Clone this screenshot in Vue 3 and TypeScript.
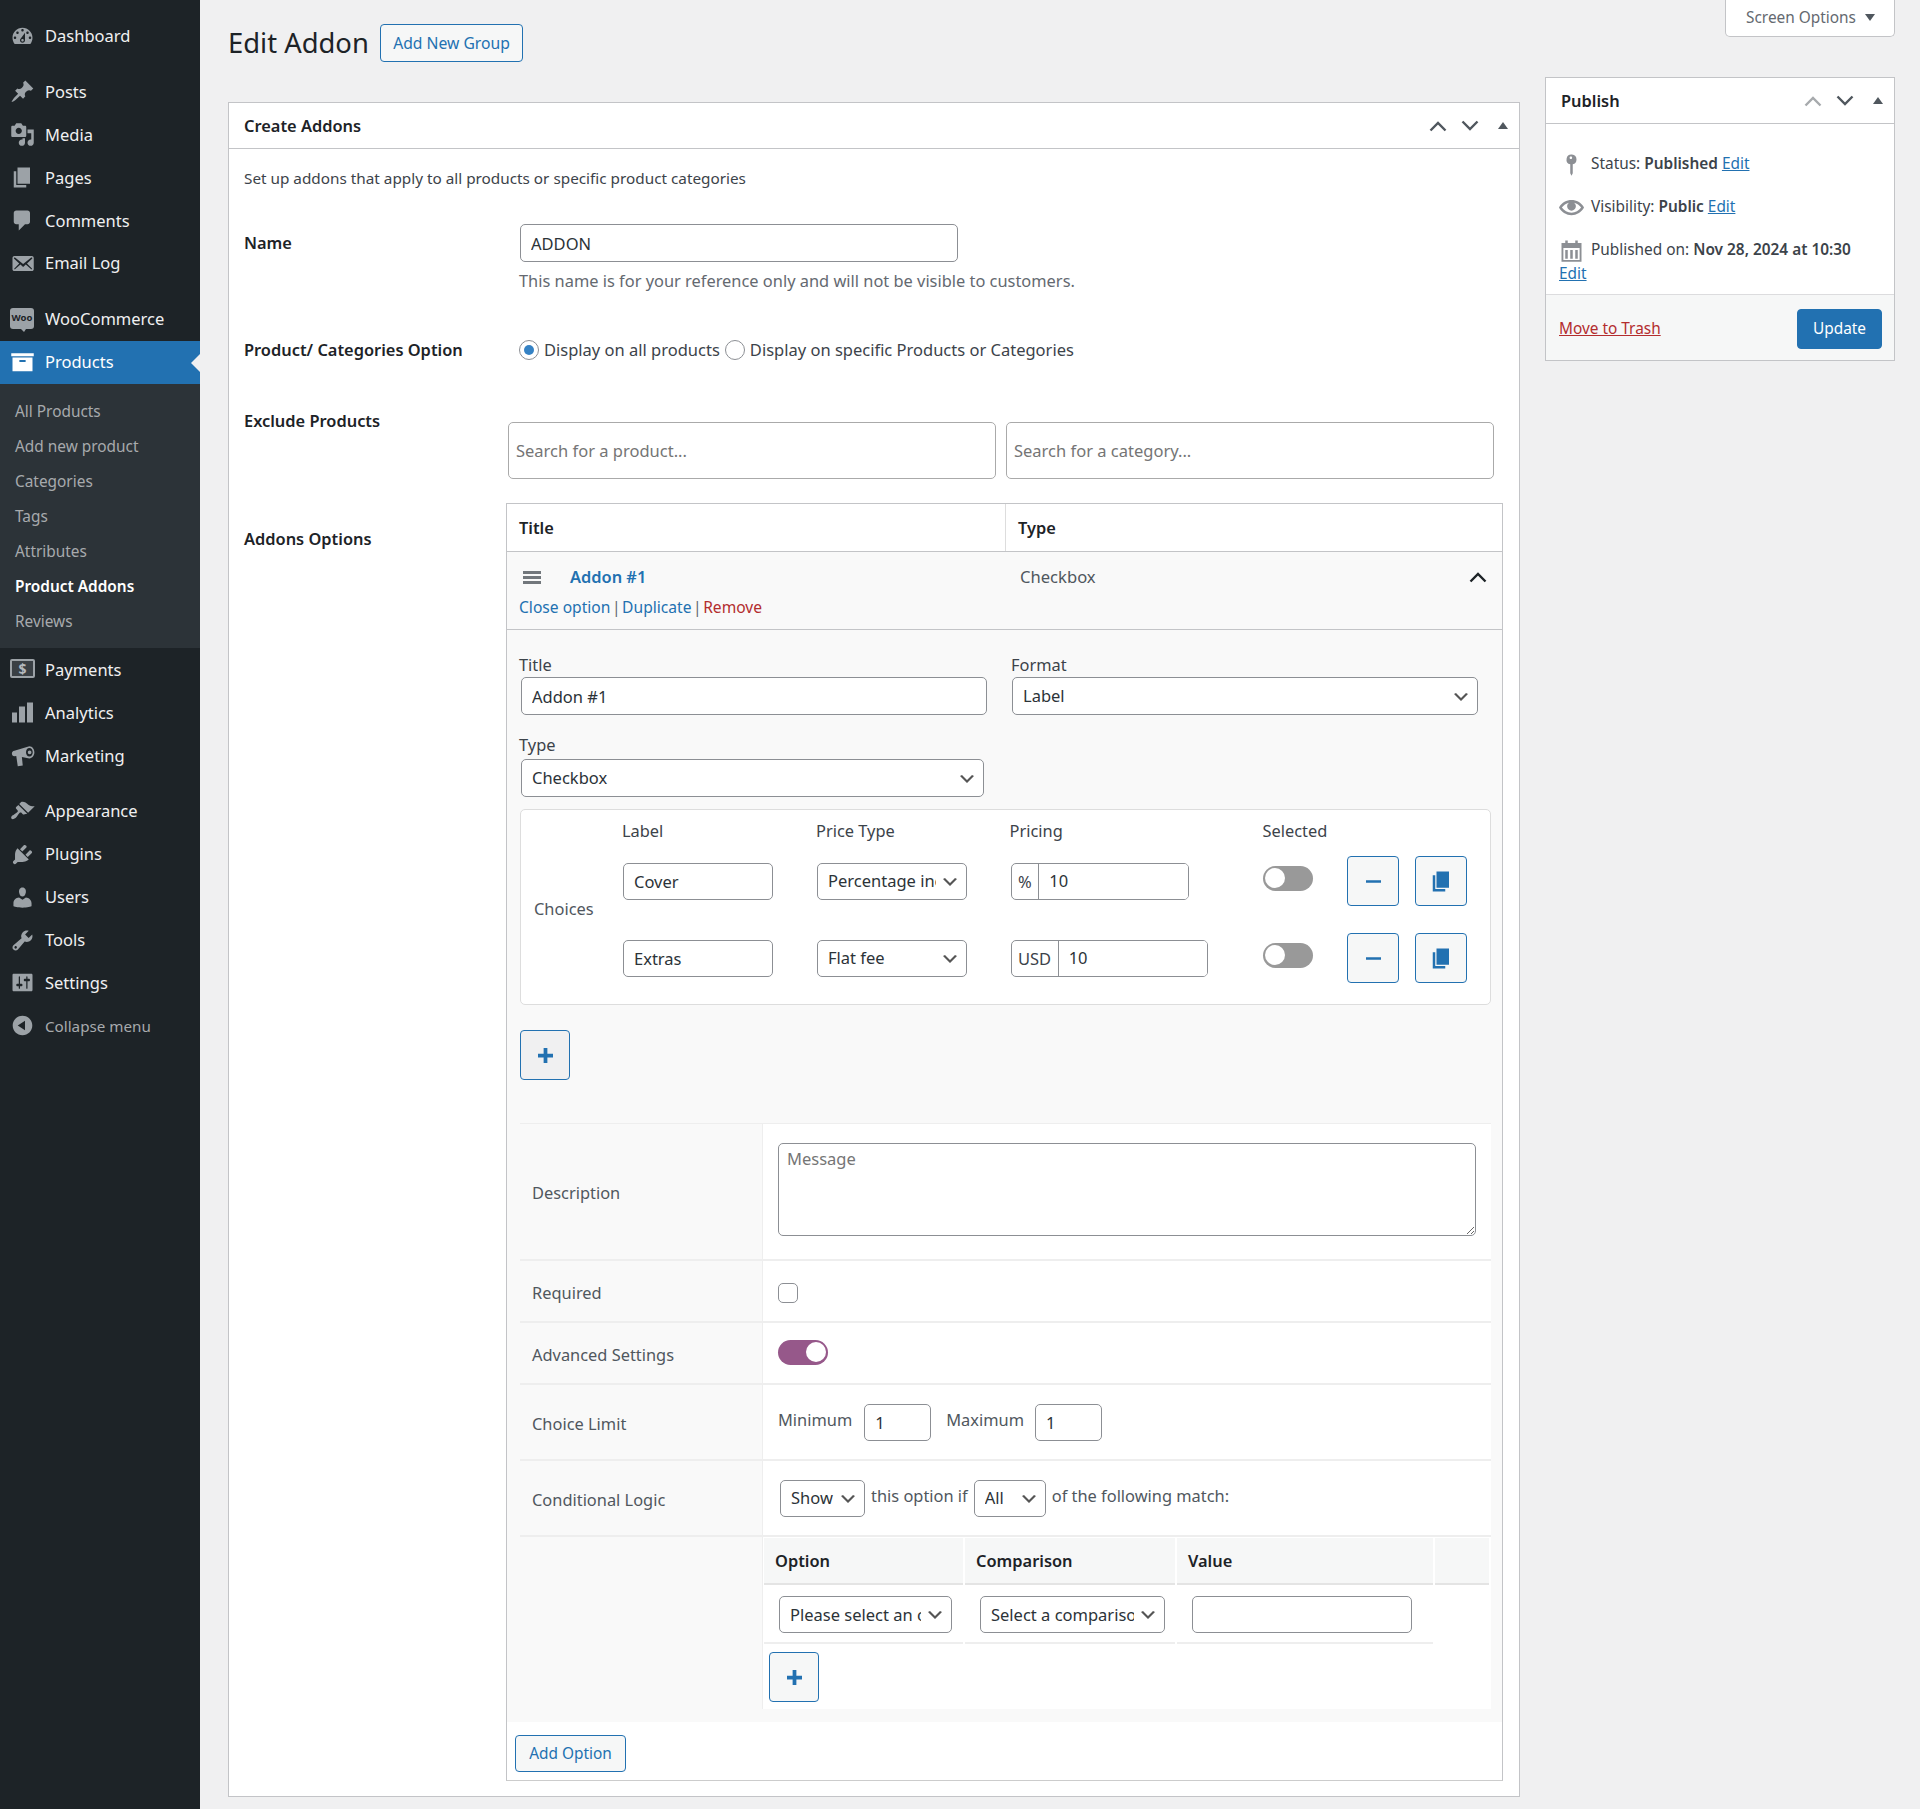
<template>
  <div class="page">
    <!-- Admin sidebar -->
    <aside class="sidebar">
      <template v-for="item in menu" :key="item.label">
        <div class="menu-item" :class="{ current: item.current, dim: item.dim, sep: item.sep }">
          <span class="menu-icon">
            <span v-if="item.woo" class="woo-icon">Woo</span>
            <span v-else-if="item.pay" class="pay-icon">$</span>
            <svg v-else viewBox="0 0 20 20" width="25" height="25"><path :d="item.icon" /></svg>
          </span>
          <span>{{ item.label }}</span>
        </div>
        <ul v-if="item.current" class="submenu">
          <li v-for="sub in submenu" :key="sub" :class="{ active: sub === 'Product Addons' }">{{ sub }}</li>
        </ul>
      </template>
    </aside>

    <main class="content">
      <!-- Left column -->
      <div class="col-main">
        <div class="page-head">
          <h1>Edit Addon</h1>
          <button class="btn-outline new-group">Add New Group</button>
        </div>

        <section class="postbox">
          <header class="postbox-head">
            <h2>Create Addons</h2>
            <div class="box-controls">
              <svg class="ctrl-up" viewBox="0 0 18 12" width="18" height="12"><path d="M1.5 10.5 9 3l7.5 7.5" /></svg>
              <svg class="ctrl-down" viewBox="0 0 18 12" width="18" height="12"><path d="M1.5 1.5 9 9l7.5-7.5" /></svg>
              <span class="ctrl-tri"></span>
            </div>
          </header>

          <div class="postbox-body">
            <p class="intro">Set up addons that apply to all products or specific product categories</p>

            <div class="form-row name-row">
              <label class="row-label">Name</label>
              <div class="name-field">
                <input class="field name-input" type="text" value="ADDON" />
                <p class="help">This name is for your reference only and will not be visible to customers.</p>
              </div>
            </div>

            <div class="form-row radio-row">
              <label class="row-label">Product/ Categories Option</label>
              <div class="radio-field">
                <input class="radio" type="radio" name="scope" checked />
                <span>Display on all products</span>
                <input class="radio" type="radio" name="scope" />
                <span>Display on specific Products or Categories</span>
              </div>
            </div>

            <div class="form-row exclude-row">
              <label class="row-label">Exclude Products</label>
              <div class="exclude-field">
                <input class="search" type="text" placeholder="Search for a product..." />
                <input class="search" type="text" placeholder="Search for a category..." />
              </div>
            </div>

            <div class="form-row addons-row">
              <label class="row-label addons-label">Addons Options</label>

              <div class="panel">
                <div class="panel-cols panel-head">
                  <div class="col-title">Title</div>
                  <div class="col-type">Type</div>
                </div>

                <div class="addon-row">
                  <div class="addon-line">
                    <span class="drag"><i></i><i></i><i></i></span>
                    <a class="addon-name">Addon #1</a>
                    <span class="addon-type">Checkbox</span>
                    <svg class="addon-chevron" viewBox="0 0 18 12" width="18" height="12"><path d="M1.5 10.5 9 3l7.5 7.5" /></svg>
                  </div>
                  <div class="addon-actions">
                    <a>Close option</a> <span class="bar">|</span> <a>Duplicate</a> <span class="bar">|</span> <a class="danger">Remove</a>
                  </div>
                </div>

                <div class="addon-body">
                  <div class="two-col">
                    <div>
                      <label class="stack-label">Title</label>
                      <input class="field title-input" type="text" value="Addon #1" />
                    </div>
                    <div>
                      <label class="stack-label">Format</label>
                      <select class="field select format-select"><option>Label</option></select>
                    </div>
                  </div>

                  <label class="stack-label type-label">Type</label>
                  <select class="field select type-select"><option>Checkbox</option></select>

                  <div class="choices">
                    <div class="choices-title">Choices</div>
                    <div class="choice-head c-label">Label</div>
                    <div class="choice-head c-price">Price Type</div>
                    <div class="choice-head c-pricing">Pricing</div>
                    <div class="choice-head c-selected">Selected</div>

                    <template v-for="choice in choices" :key="choice.label">
                      <input class="field choice-input" type="text" :value="choice.label" />
                      <select class="field select choice-select"><option>{{ choice.priceType }}</option></select>
                      <div class="price-group" :class="{ wide: choice.unit === 'USD' }">
                        <span class="price-unit">{{ choice.unit }}</span>
                        <input class="price-input" type="text" value="10" />
                      </div>
                      <span class="toggle choice-toggle"><i></i></span>
                      <div class="choice-actions">
                        <button class="icon-btn">
                          <svg viewBox="0 0 20 20" width="25" height="25"><path d="M4 9h12v2H4z" /></svg>
                        </button>
                        <button class="icon-btn">
                          <svg viewBox="0 0 20 20" width="25" height="25"><path d="M6 15V2h10v13H6zm-1 1h8v2H3V5h2v11z" /></svg>
                        </button>
                      </div>
                    </template>
                  </div>

                  <button class="icon-btn add-choice">
                    <svg viewBox="0 0 20 20" width="25" height="25"><path d="M11.5 4v4.5H16v3h-4.5V16h-3v-4.5H4v-3h4.5V4z" /></svg>
                  </button>

                  <div class="settings">
                    <div class="set-row desc-row">
                      <div class="set-label">Description</div>
                      <div class="set-value"><textarea class="message" placeholder="Message"></textarea></div>
                    </div>
                    <div class="set-row small-row">
                      <div class="set-label">Required</div>
                      <div class="set-value"><input class="check" type="checkbox" /></div>
                    </div>
                    <div class="set-row small-row">
                      <div class="set-label">Advanced Settings</div>
                      <div class="set-value"><span class="toggle on adv-toggle"><i></i></span></div>
                    </div>
                    <div class="set-row big-row">
                      <div class="set-label">Choice Limit</div>
                      <div class="set-value limit">
                        <span class="limit-text">Minimum</span>
                        <input class="field limit-input" type="text" value="1" />
                        <span class="limit-text max">Maximum</span>
                        <input class="field limit-input" type="text" value="1" />
                      </div>
                    </div>
                    <div class="set-row big-row">
                      <div class="set-label">Conditional Logic</div>
                      <div class="set-value logic">
                        <select class="field select show-select"><option>Show</option></select>
                        <span class="limit-text">this option if</span>
                        <select class="field select all-select"><option>All</option></select>
                        <span class="limit-text">of the following match:</span>
                      </div>
                    </div>
                    <div class="set-row rules-row">
                      <div class="set-label"></div>
                      <div class="rules">
                        <div class="rules-grid">
                          <div class="rule-head">Option</div>
                          <div class="rule-head">Comparison</div>
                          <div class="rule-head">Value</div>
                          <div class="rule-head"></div>
                          <div class="rule-cell"><select class="field select rule-option"><option>Please select an option</option></select></div>
                          <div class="rule-cell"><select class="field select rule-compare"><option>Select a comparison</option></select></div>
                          <div class="rule-cell"><input class="field rule-value" type="text" /></div>
                        </div>
                        <button class="icon-btn add-rule">
                          <svg viewBox="0 0 20 20" width="25" height="25"><path d="M11.5 4v4.5H16v3h-4.5V16h-3v-4.5H4v-3h4.5V4z" /></svg>
                        </button>
                      </div>
                    </div>
                  </div>
                </div>

                <div class="panel-foot">
                  <button class="btn-outline add-option">Add Option</button>
                </div>
              </div>
            </div>
          </div>
        </section>
      </div>

      <!-- Right column -->
      <div class="col-side">
        <button class="screen-options">Screen Options <span class="screen-tri"></span></button>

        <section class="publish">
          <header class="publish-head">
            <h2>Publish</h2>
            <div class="box-controls">
              <svg class="ctrl-up light" viewBox="0 0 18 12" width="18" height="12"><path d="M1.5 10.5 9 3l7.5 7.5" /></svg>
              <svg class="ctrl-down" viewBox="0 0 18 12" width="18" height="12"><path d="M1.5 1.5 9 9l7.5-7.5" /></svg>
              <span class="ctrl-tri"></span>
            </div>
          </header>
          <div class="publish-body">
            <div class="misc">
              <svg class="misc-icon" viewBox="0 0 20 20" width="25" height="25"><path d="M14 6a4 4 0 1 0-5 3.87V17l1 2 1-2V9.87A4 4 0 0 0 14 6zM9.5 3.5c.6 0 1 .4 1 1s-.4 1-1 1-1-.4-1-1 .4-1 1-1z" /></svg>
              Status: <b>Published</b> <a>Edit</a>
            </div>
            <div class="misc">
              <svg class="misc-icon" viewBox="0 0 20 20" width="25" height="25"><path d="M19.7 9.4C17.7 6 14 3.9 10 3.9S2.3 6 .3 9.4L0 10l.3.6c2 3.4 5.7 5.5 9.7 5.5s7.7-2.1 9.7-5.5l.3-.6-.3-.6zM10 14.1c-3.1 0-6-1.6-7.7-4.1C3.6 8 5.7 6.6 8 6.1c-.9.6-1.5 1.7-1.5 2.9 0 1.9 1.6 3.5 3.5 3.5s3.5-1.6 3.5-3.5c0-1.2-.6-2.3-1.5-2.9 2.3.5 4.4 1.9 5.7 3.9-1.7 2.5-4.6 4.1-7.7 4.1z" /></svg>
              Visibility: <b>Public</b> <a>Edit</a>
            </div>
            <div class="misc">
              <svg class="misc-icon" viewBox="0 0 20 20" width="25" height="25"><path d="M5 2h2v2h6V2h2v2h3v15H2V4h3V2zM3.5 8v9.5h13V8h-13zM5 9.5h2v7H5v-7zm4 0h2v7H9v-7zm4 0h2v7h-2v-7z" /></svg>
              Published on: <b>Nov 28, 2024 at 10:30</b><br /><a>Edit</a>
            </div>
          </div>
          <footer class="publish-foot">
            <a class="trash">Move to Trash</a>
            <button class="update">Update</button>
          </footer>
        </section>
      </div>
    </main>
  </div>
</template>

<script setup lang="ts">
interface MenuItem {
  label: string
  icon?: string
  current?: boolean
  dim?: boolean
  sep?: boolean
  woo?: boolean
  pay?: boolean
}

const menu: MenuItem[] = [
  { label: 'Dashboard', icon: 'M3.76 16h12.48c1.1-1.37 1.76-3.11 1.76-5 0-4.42-3.58-8-8-8s-8 3.58-8 8c0 1.89.66 3.63 1.76 5zM10 4c.55 0 1 .45 1 1s-.45 1-1 1-1-.45-1-1 .45-1 1-1zM6 6c.55 0 1 .45 1 1s-.45 1-1 1-1-.45-1-1 .45-1 1-1zm8 0c.55 0 1 .45 1 1s-.45 1-1 1-1-.45-1-1 .45-1 1-1zm-5.37 5.55L12 7v6c0 1.1-.9 2-2 2s-2-.9-2-2c0-.57.24-1.08.63-1.45zM4 10c.55 0 1 .45 1 1s-.45 1-1 1-1-.45-1-1 .45-1 1-1zm12 0c.55 0 1 .45 1 1s-.45 1-1 1-1-.45-1-1 .45-1 1-1zm-5 3c0-.55-.45-1-1-1s-1 .45-1 1 .45 1 1 1 1-.45 1-1z' },
  { label: 'Posts', sep: true, icon: 'M10.44 3.02l1.82-1.82 6.36 6.35-1.83 1.82c-1.05-.68-2.48-.57-3.41.36l-.75.75c-.92.93-1.04 2.35-.35 3.41l-1.83 1.82-2.41-2.41-2.8 2.79c-.42.42-3.38 2.71-3.8 2.29s1.86-3.39 2.28-3.81l2.79-2.79L4.1 9.36l1.83-1.82c1.05.69 2.48.57 3.4-.36l.75-.75c.93-.92 1.05-2.35.36-3.41z' },
  { label: 'Media', icon: 'M13 11V4c0-.55-.45-1-1-1h-1.67L9 1H5L3.67 3H2c-.55 0-1 .45-1 1v7c0 .55.45 1 1 1h10c.55 0 1-.45 1-1zM7 4.5c1.38 0 2.5 1.12 2.5 2.5S8.38 9.5 7 9.5 4.5 8.38 4.5 7 5.62 4.5 7 4.5zM14 6h5v10.5c0 1.38-1.12 2.5-2.5 2.5S14 17.88 14 16.5s1.12-2.5 2.5-2.5c.17 0 .34.02.5.05V9h-3V6zm-4 8.05V13h2v3.5c0 1.38-1.12 2.5-2.5 2.5S7 17.88 7 16.5 8.12 14 9.5 14c.17 0 .34.02.5.05z' },
  { label: 'Pages', icon: 'M6 15V2h10v13H6zm-1 1h8v2H3V5h2v11z' },
  { label: 'Comments', icon: 'M5 2h9c1.1 0 2 .9 2 2v7c0 1.1-.9 2-2 2h-2l-5 5v-5H5c-1.1 0-2-.9-2-2V4c0-1.1.9-2 2-2z' },
  { label: 'Email Log', icon: 'M19 14.5v-9c0-.83-.67-1.5-1.5-1.5H3.49c-.83 0-1.5.67-1.5 1.5v9c0 .83.67 1.5 1.5 1.5H17.5c.83 0 1.5-.67 1.5-1.5zm-1.31-9.11c.33.33.15.67-.03.84L13.6 9.95l3.9 4.06c.12.14.2.36.06.51-.13.16-.43.15-.56.05l-4.37-3.73-2.14 1.95-2.13-1.95-4.37 3.73c-.13.1-.43.11-.56-.05-.14-.15-.06-.37.06-.51l3.9-4.06-4.06-3.72c-.18-.17-.36-.51-.03-.84s.67-.17.95.07l6.24 5.04 6.25-5.04c.28-.24.62-.4.95-.07z' },
  { label: 'WooCommerce', sep: true, woo: true },
  { label: 'Products', current: true, icon: 'M1 2.5h18V5H1zM2 6h16v11H2zm5.5 2v1.5h5V8z' },
  { label: 'Payments', pay: true },
  { label: 'Analytics', icon: 'M1.6 10h4v8h-4zM7.2 5.2H12V18H7.2zM13.6 2h4.8v16h-4.8z' },
  { label: 'Marketing', icon: 'M15.5 2.5C17.9 2.5 19.5 4.9 19.5 7.4S17.9 12.3 15.5 12.3L9.5 11.2l.7 6.8-4 .5L5 10.4l-1.5.2C2.2 10.6 1.5 9.5 1.5 8.4S2.2 6.4 3.5 6.2zM15.5 4C13.8 4 12.8 5.6 12.8 7.4S13.8 10.8 15.5 10.8 18.2 9.2 18.2 7.4 17.2 4 15.5 4zM15.7 5.9a1.5 1.5 0 1 1 0 3 1.5 1.5 0 1 1 0-3z' },
  { label: 'Appearance', sep: true, icon: 'M14.48 11.06L7.41 3.99l1.5-1.5c.5-.56 2.3-.47 3.51.32 1.21.8 1.43 1.28 2.91 2.1 1.18.64 2.45 1.26 4.45.85zm-.71.71L6.7 4.7 4.93 6.47c-.39.39-.39 1.02 0 1.41l1.06 1.06c.39.39.39 1.03 0 1.42-.6.6-1.43 1.11-2.21 1.69-.35.26-.7.53-1.01.84C1.43 13.23.4 14.89 1.3 15.79c.9.89 2.56-.13 3.92-1.49.31-.31.58-.66.84-1.01.58-.78 1.09-1.61 1.69-2.21.39-.39 1.03-.39 1.42 0l1.06 1.06c.39.39 1.02.39 1.41 0z' },
  { label: 'Plugins', icon: 'M13.11 4.36L9.87 7.6 8 5.73l3.24-3.24c.35-.34 1.05-.2 1.56.32.52.51.66 1.21.31 1.55zm-8 1.77l.91-1.12 9.01 9.01-1.19.84c-.71.71-2.63 1.16-3.82 1.16H6.14L4.9 17.26c-.59.59-1.54.59-2.12 0-.59-.58-.59-1.53 0-2.12l1.24-1.24v-3.88c0-1.13.4-3.19 1.09-3.89zm7.26 3.97l3.24-3.24c.34-.35 1.04-.21 1.55.31.52.51.66 1.21.31 1.55l-3.24 3.25z' },
  { label: 'Users', icon: 'M10 9.25c-2.27 0-2.73-3.44-2.73-3.44C7 4.02 7.82 2 9.97 2c2.16 0 2.98 2.02 2.71 3.81 0 0-.41 3.44-2.68 3.44zm0 2.57L12.72 10c2.39 0 4.52 2.33 4.52 4.53v2.49s-3.65 1.13-7.24 1.13c-3.65 0-7.24-1.13-7.24-1.13v-2.49c0-2.25 1.94-4.48 4.47-4.48z' },
  { label: 'Tools', icon: 'M16.68 9.77c-1.34 1.34-3.3 1.67-4.95.99l-5.41 6.52c-.99.99-2.59.99-3.58 0s-.99-2.59 0-3.57l6.52-5.42c-.68-1.65-.35-3.61.99-4.95 1.28-1.28 3.12-1.62 4.72-1.06l-2.89 2.89 2.82 2.82 2.86-2.87c.53 1.58.18 3.39-1.08 4.65zM3.81 16.21c.4.39 1.04.39 1.43 0 .4-.4.4-1.04 0-1.43-.39-.4-1.03-.4-1.43 0-.39.39-.39 1.03 0 1.43z' },
  { label: 'Settings', icon: 'M18 16V4c0-.55-.45-1-1-1H3c-.55 0-1 .45-1 1v12c0 .55.45 1 1 1h14c.55 0 1-.45 1-1zM8 11h1c.55 0 1 .45 1 1s-.45 1-1 1H8v1.5c0 .28-.22.5-.5.5s-.5-.22-.5-.5V13H6c-.55 0-1-.45-1-1s.45-1 1-1h1V5.5c0-.28.22-.5.5-.5s.5.22.5.5V11zm5-2h-1c-.55 0-1-.45-1-1s.45-1 1-1h1V5.5c0-.28.22-.5.5-.5s.5.22.5.5V7h1c.55 0 1 .45 1 1s-.45 1-1 1h-1v5.5c0 .28-.22.5-.5.5s-.5-.22-.5-.5V9z' },
  { label: 'Collapse menu', dim: true, icon: 'M10 2.16c4.33 0 7.84 3.51 7.84 7.84s-3.51 7.84-7.84 7.84S2.16 14.33 2.16 10 5.71 2.16 10 2.16zm2 11.72V6.12L6.18 9.97z' },
]

const submenu: string[] = ['All Products', 'Add new product', 'Categories', 'Tags', 'Attributes', 'Product Addons', 'Reviews']

const choices = [
  { label: 'Cover', priceType: 'Percentage increase', unit: '%' },
  { label: 'Extras', priceType: 'Flat fee', unit: 'USD' },
]
</script>

<style>
body {
  margin: 0;
  background: #f0f0f1;
}
</style>

<style scoped>
.page {
  display: flex;
  min-height: 1809px;
  background: #f0f0f1;
  color: #3c434a;
  font-family: "Noto Sans", "Open Sans", sans-serif;
  font-size: 15.4px;
  line-height: 22px;
}

/* sidebar */
.sidebar {
  width: 200px;
  flex-shrink: 0;
  background: #1d2327;
  padding-top: 14.6px;
  box-sizing: border-box;
}
.menu-item {
  display: flex;
  align-items: center;
  height: 42.9px;
  padding-left: 10px;
  color: #f0f0f1;
  font-size: 16.5px;
}
.menu-item.sep {
  margin-top: 13px;
}
.menu-item.current {
  margin-top: 0;
  background: #2271b1;
  color: #fff;
  position: relative;
}
.menu-item.current::after {
  content: "";
  position: absolute;
  right: 0;
  top: 13px;
  border: 9px solid transparent;
  border-right-color: #f0f0f1;
  border-left: 0;
}
.menu-item.dim {
  color: #a7aaad;
  font-size: 15.2px;
}
.menu-icon {
  display: flex;
  width: 35px;
  flex-shrink: 0;
}
.menu-icon svg {
  fill: #9ca2a7;
}
.current .menu-icon svg {
  fill: #fff;
}
.woo-icon {
  position: relative;
  width: 24px;
  height: 21px;
  margin: -2px 0 0 0;
  border-radius: 3px;
  background: #9ca2a7;
  color: #1d2327;
  font-size: 9.5px;
  font-weight: 700;
  line-height: 20px;
  text-align: center;
}
.woo-icon::after {
  content: "";
  position: absolute;
  left: 11px;
  bottom: -3px;
  border-top: 3px solid #9ca2a7;
  border-left: 3px solid transparent;
  border-right: 2px solid transparent;
}
.pay-icon {
  width: 21px;
  height: 15px;
  margin-top: -2px;
  border: 2px solid #9ca2a7;
  border-radius: 2px;
  background: #3a4045;
  color: #b4b9be;
  font-size: 14px;
  font-weight: 700;
  line-height: 15px;
  text-align: center;
}
.submenu {
  margin: 0;
  padding: 10px 0 7px;
  background: #2c3338;
  list-style: none;
  color: #a7aaad;
  height: 264.6px;
  box-sizing: border-box;
}
.submenu li {
  height: 35.1px;
  padding-left: 15px;
  line-height: 35.1px;
}
.submenu li.active {
  color: #fff;
  font-weight: 600;
}

/* page columns */
.content {
  flex: 1;
  display: grid;
  grid-template-columns: 1292px 350px;
  column-gap: 25px;
  padding-left: 28px;
  align-items: start;
}
.page-head {
  display: flex;
  align-items: center;
  height: 38px;
  margin: 24px 0 40px;
}
h1 {
  width: 152px;
  margin: 0;
  font-size: 27.4px;
  font-weight: 400;
  color: #1d2327;
  white-space: nowrap;
}
.btn-outline {
  height: 38px;
  padding: 0;
  border: 1px solid #2271b1;
  border-radius: 4px;
  background: #f6f7f7;
  color: #2271b1;
  font: inherit;
}
.new-group {
  width: 143px;
  font-size: 15.7px;
}

/* main postbox */
.postbox {
  height: 1695px;
  box-sizing: border-box;
  border: 1px solid #c3c4c7;
  background: #fff;
}
.postbox-head,
.publish-head {
  display: flex;
  align-items: center;
  justify-content: space-between;
  height: 45px;
  padding: 0 11px 0 15px;
  border-bottom: 1px solid #c3c4c7;
  box-sizing: content-box;
}
h2 {
  margin: 0;
  font-size: 16.4px;
  font-weight: 600;
  color: #1d2327;
}
.box-controls {
  display: flex;
  align-items: center;
  gap: 14px;
}
.box-controls svg,
.addon-chevron {
  fill: none;
  stroke: #50575e;
  stroke-width: 2.4;
}
.box-controls .light {
  stroke: #a7aaad;
}
.ctrl-tri {
  margin-left: 5px;
  border-left: 5px solid transparent;
  border-right: 5px solid transparent;
  border-bottom: 7px solid #50575e;
}
.postbox-body {
  padding: 18px 16px 0 15px;
}
.intro {
  margin: 0;
  font-size: 15.3px;
}
.form-row {
  display: grid;
  grid-template-columns: 262px 1fr;
}
.row-label {
  font-size: 16.4px;
  font-weight: 600;
  color: #1d2327;
}
.name-row {
  margin-top: 35px;
}
.name-row .row-label {
  padding-top: 8px;
}
.name-field {
  padding-left: 14px;
}
.field {
  height: 38px;
  box-sizing: border-box;
  padding: 0 10px;
  border: 1px solid #8c8f94;
  border-radius: 5px;
  background: #fff;
  color: #2c3338;
  font: inherit;
  font-size: 16.5px;
  outline: none;
}
.name-input {
  display: block;
  width: 438px;
}
.help {
  margin: 8px 0 0 -1px;
  color: #646970;
  font-size: 16.4px;
}
.radio-row {
  margin-top: 47px;
}
.radio-field {
  display: flex;
  align-items: center;
  gap: 5px;
  padding-left: 13px;
  font-size: 16.5px;
}
.radio {
  appearance: none;
  display: flex;
  align-items: center;
  justify-content: center;
  width: 20px;
  height: 20px;
  margin: 0;
  border: 1px solid #8c8f94;
  border-radius: 50%;
  background: #fff;
}
.radio:checked::before {
  content: "";
  width: 10px;
  height: 10px;
  border-radius: 50%;
  background: #3582c4;
}
.exclude-row {
  margin-top: 49px;
}
.exclude-field {
  display: flex;
  gap: 10px;
  padding: 12px 9px 0 2px;
}
.search {
  flex: 1;
  min-width: 0;
  height: 57px;
  box-sizing: border-box;
  padding: 0 7px;
  border: 1px solid #aaa;
  border-radius: 5px;
  font: inherit;
  font-size: 16.5px;
  outline: none;
}
.addons-row {
  margin-top: 24px;
}
.addons-label {
  padding-top: 25px;
}

/* addons panel */
.panel {
  height: 1278px;
  box-sizing: border-box;
  border: 1px solid #c3c4c7;
  border-bottom-color: #ccc;
}
.panel-cols {
  display: grid;
  grid-template-columns: 499px 1fr;
}
.panel-head {
  height: 48px;
  box-sizing: border-box;
  border-bottom: 1px solid #c3c4c7;
  line-height: 47px;
  font-size: 16.4px;
  font-weight: 600;
  color: #1d2327;
}
.col-title {
  padding-left: 12px;
  border-right: 1px solid #ddd;
}
.col-type {
  padding-left: 12px;
}
.addon-row {
  height: 78px;
  box-sizing: border-box;
  padding-top: 14px;
  border-bottom: 1px solid #c3c4c7;
  background: #f9f9f9;
}
.addon-line {
  display: flex;
  align-items: center;
  height: 22px;
  padding-left: 16px;
}
.drag {
  display: flex;
  flex-direction: column;
  gap: 2px;
  width: 18px;
}
.drag i {
  height: 3px;
  background: #72777c;
}
.addon-name {
  width: 450px;
  margin-left: 29px;
  font-size: 16.4px;
  font-weight: 600;
  color: #2271b1;
}
.addon-type {
  flex: 1;
  font-size: 16.6px;
  color: #50575e;
}
.addon-chevron {
  margin-right: 15px;
  stroke: #1d2327;
}
.addon-actions {
  margin-top: 8px;
  padding-left: 12px;
  color: #646970;
  font-size: 15.6px;
}
.addon-actions a {
  color: #2271b1;
}
.addon-actions a.danger {
  color: #b32d2e;
}
.bar {
  margin: 0 -2.5px;
}
.addon-body {
  height: 1092px;
  box-sizing: border-box;
  padding: 24px 0 0 12px;
  background: #f9f9f9;
}
.two-col {
  display: grid;
  grid-template-columns: 468px 467px;
  column-gap: 24px;
}
.stack-label {
  display: block;
  font-size: 16.4px;
  color: #3c434a;
}
.title-input {
  display: block;
  width: 466px;
  margin: 1px 0 0 2px;
}
.format-select {
  display: block;
  width: 466px;
  margin: 1px 0 0 1px;
}
.select {
  appearance: none;
  padding-right: 30px;
  background: #fff url("data:image/svg+xml,%3Csvg%20xmlns%3D%22http%3A%2F%2Fwww.w3.org%2F2000%2Fsvg%22%20viewBox%3D%220%200%2020%2020%22%3E%3Cpath%20d%3D%22M5%206l5%205%205-5%202%201-7%207-7-7%202-1z%22%20fill%3D%22%23555%22%2F%3E%3C%2Fsvg%3E") no-repeat right 6px top 55% / 20px 20px;
}
.type-label {
  margin-top: 19px;
}
.type-select {
  display: block;
  width: 463px;
  margin: 3px 0 0 2px;
}

/* choices box */
.choices {
  display: grid;
  grid-template-columns: 101px 194px 193.5px 253px 84.5px 1fr;
  /* head row is 22px of text in a 9px track: with the 27px gap the first row starts 36px down */
  grid-template-rows: 9px 50px 50px;
  row-gap: 27px;
  align-items: center;
  width: 971px;
  height: 196px;
  box-sizing: border-box;
  margin: 12px 0 0 1px;
  padding: 10px 0 0;
  border: 1px solid #ddd;
  border-radius: 5px;
  background: #fff;
}
.choices-title {
  grid-column: 1;
  grid-row: 2 / 4;
  padding: 0 0 21px 13px;
  color: #50575e;
  font-size: 16.4px;
}
.choice-head {
  grid-row: 1;
  align-self: start;
  font-size: 16.4px;
}
.c-label { grid-column: 2; }
.c-price { grid-column: 3; }
.c-pricing { grid-column: 4; }
.c-selected { grid-column: 5; }
.choice-input,
.choice-select {
  width: 150px;
  height: 37px;
  margin-left: 1px;
}
.choice-input {
  grid-column: 2;
}
.price-group {
  display: flex;
  width: 178px;
  height: 37px;
  box-sizing: border-box;
  margin-left: 1px;
  border: 1px solid #8c8f94;
  border-radius: 5px;
  background: #fff;
  overflow: hidden;
  font-size: 16.5px;
}
.price-group.wide {
  width: 197px;
}
.price-unit {
  padding: 0 6.5px;
  border-right: 1px solid #8c8f94;
  line-height: 35px;
}
.price-input {
  flex: 1;
  min-width: 0;
  padding: 0 10px;
  border: 0;
  color: #2c3338;
  font: inherit;
  outline: none;
}
.toggle {
  display: flex;
  align-items: center;
  width: 50px;
  height: 25px;
  box-sizing: border-box;
  padding: 0 2px;
  border-radius: 13px;
  background: #999;
}
.toggle i {
  width: 20px;
  height: 20px;
  border-radius: 50%;
  background: #fff;
}
.toggle.on {
  justify-content: flex-end;
  background: #96588a;
}
.choice-toggle {
  margin-bottom: 6px;
}
.choice-actions {
  display: flex;
  gap: 16px;
}
.icon-btn {
  display: flex;
  align-items: center;
  justify-content: center;
  width: 52px;
  height: 50px;
  padding: 0;
  border: 1px solid #2271b1;
  border-radius: 4px;
  background: #f6f7f7;
}
.icon-btn svg {
  fill: #2271b1;
}
.add-choice {
  width: 50px;
  margin: 25px 0 0 1px;
  background: #f0f0f1;
}

/* settings table */
.settings {
  width: 971px;
  margin: 43px 0 0 1px;
  border-top: 1px solid #eee;
}
.set-row {
  display: grid;
  grid-template-columns: 242px 1fr;
  box-sizing: border-box;
  border-bottom: 2px solid #eee;
}
.desc-row { height: 137px; }
.small-row { height: 62px; }
.big-row { height: 76px; }
.rules-row {
  border-bottom: 0;
}
.set-label {
  align-self: center;
  padding: 3px 0 0 12px;
  font-size: 16.4px;
  color: #50575e;
}
.set-value {
  display: flex;
  align-items: center;
  padding-left: 15px;
  border-left: 1px solid #eee;
  background: #fff;
}
.message {
  display: block;
  width: 698px;
  height: 93px;
  box-sizing: border-box;
  margin-bottom: 5px;
  padding: 4px 8px;
  border: 1px solid #8c8f94;
  border-radius: 5px;
  font: inherit;
  font-size: 16.5px;
  outline: none;
}
.check {
  appearance: none;
  width: 20px;
  height: 20px;
  margin: 4px 0 0;
  border: 1px solid #8c8f94;
  border-radius: 5px;
  background: #fff;
}
.adv-toggle {
  margin-bottom: 2px;
}
.limit-text {
  margin-bottom: 5px;
  font-size: 16.4px;
  color: #50575e;
}
.limit-input {
  width: 67px;
  height: 37px;
  margin-left: 12px;
}
.max {
  margin-left: 15px;
}
.max + .limit-input {
  margin-left: 11px;
}
.logic {
  gap: 6px;
}
.show-select {
  width: 85px;
  height: 37px;
  margin-left: 2px;
}
.all-select {
  width: 72px;
  height: 37px;
}
.rules {
  height: 172px;
  padding: 1px 0 0 1px;
  border-left: 1px solid #eee;
  box-sizing: border-box;
  background: #fff;
}
.rules-grid {
  display: grid;
  grid-template-columns: 199px 210px 256px 54px;
  column-gap: 2px;
}
.rule-head {
  height: 47px;
  box-sizing: border-box;
  padding-left: 11px;
  border-bottom: 2px solid #e4e4e4;
  background: #f6f7f7;
  font-size: 16.4px;
  font-weight: 600;
  line-height: 45px;
  color: #1d2327;
}
.rule-cell {
  height: 59px;
  box-sizing: border-box;
  padding: 11px 0 0 15px;
  border-bottom: 2px solid #eee;
}
.rule-option {
  width: 173px;
  height: 37px;
}
.rule-compare {
  width: 185px;
  height: 37px;
}
.rule-value {
  width: 220px;
  height: 37px;
}
.add-rule {
  width: 50px;
  margin: 8px 0 0 5px;
}
.panel-foot {
  padding: 13px 0 0 8px;
}
.add-option {
  display: block;
  width: 111px;
  height: 37px;
  padding: 0;
}

/* right column */
.col-side {
  display: flex;
  flex-direction: column;
  align-items: flex-end;
}
.screen-options {
  display: flex;
  align-items: center;
  gap: 9px;
  width: 170px;
  height: 37px;
  box-sizing: border-box;
  padding: 0 0 1px 20px;
  border: 1px solid #c3c4c7;
  border-top: 0;
  border-radius: 0 0 5px 5px;
  background: #fff;
  color: #646970;
  font: inherit;
}
.screen-tri {
  border-left: 5px solid transparent;
  border-right: 5px solid transparent;
  border-top: 7px solid #50575e;
}
.publish {
  width: 350px;
  height: 284px;
  box-sizing: border-box;
  margin-top: 40px;
  border: 1px solid #c3c4c7;
  background: #fff;
}
.publish-head {
  padding-left: 15px;
}
.publish-body {
  height: 170px;
  box-sizing: border-box;
  padding: 28px 13px 0;
}
.misc {
  margin-bottom: 19px;
  line-height: 24px;
}
.misc a,
.misc b {
  color: #3c434a;
}
.misc a {
  color: #2271b1;
  text-decoration: underline;
}
.misc b {
  font-weight: 600;
}
.misc-icon {
  margin: -3px 3px -3px 0;
  vertical-align: middle;
  fill: #8c8f94;
}
.publish-foot {
  display: flex;
  align-items: center;
  justify-content: space-between;
  height: 66px;
  box-sizing: border-box;
  padding: 2px 12px 0 13px;
  border-top: 1px solid #dcdcde;
  background: #f6f7f7;
}
.trash {
  color: #b32d2e;
  text-decoration: underline;
}
.update {
  width: 85px;
  height: 40px;
  border: 1px solid #2271b1;
  border-radius: 4px;
  background: #2271b1;
  color: #fff;
  font: inherit;
}
</style>
